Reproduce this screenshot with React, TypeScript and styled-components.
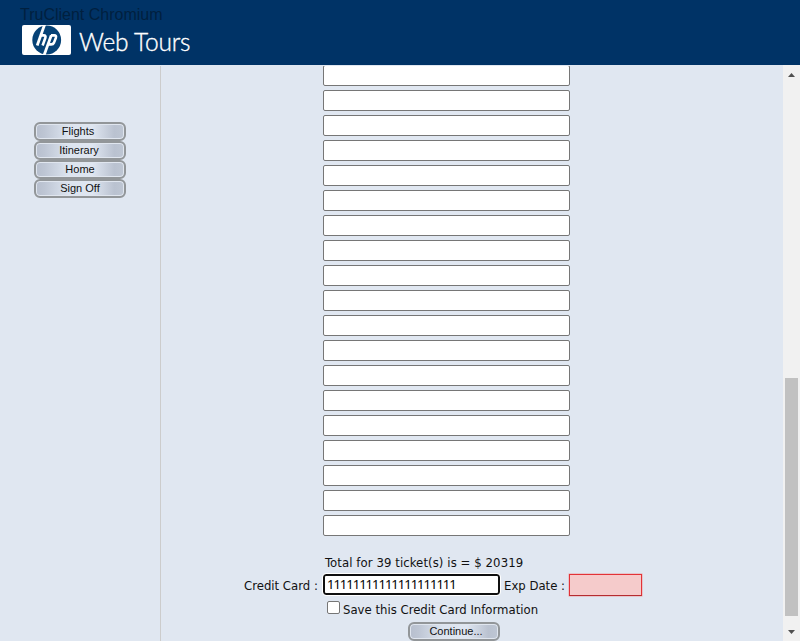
import React from 'react';
import styled, { createGlobalStyle } from 'styled-components';

const GlobalStyle = createGlobalStyle`
  * { box-sizing: border-box; }
  html, body, #root { margin: 0; height: 100%; overflow: hidden; }
  body { background: #e0e7f1; color: #111; font-family: "DejaVu Sans Condensed", "DejaVu Sans", sans-serif; }
`;

const Page = styled.div`
  height: 641px;
  width: 800px;
  display: flex;
  flex-direction: column;
  overflow: hidden;
`;

const Header = styled.header`
  position: relative;
  flex: 0 0 65px;
  background: #003366;
  display: flex;
  align-items: flex-start;
  padding: 25px 0 0 22px;
`;

const Overlay = styled.div`
  position: absolute;
  left: 20px;
  top: 6px;
  color: #00203f;
  font: 16px/18px "Liberation Sans", Arial, sans-serif;
  white-space: nowrap;
`;

const Title = styled.div`
  margin: 2px 0 0 8px;
  color: #fff;
  font: 300 24.5px/30px Lato, sans-serif;
  letter-spacing: -0.2px;
  -webkit-text-stroke: 0.35px #fff;
  white-space: nowrap;
`;

const Body = styled.div`
  flex: 1;
  min-height: 0;
  display: flex;
`;

const Nav = styled.nav`
  flex: 0 0 161px;
  margin-top: 1px;
  padding: 56px 0 0 34px;
  border-right: 1px solid #ccc;
  display: flex;
  flex-direction: column;
`;

const PillButton = styled.button<{ $shift?: number }>`
  display: block;
  width: 92px;
  height: 19px;
  flex: none;
  margin: 0;
  padding: 0 ${p => Math.max(0, -(p.$shift ?? 0))}px 0 ${p => Math.max(0, p.$shift ?? 0)}px;
  border: 2px solid #929699;
  border-radius: 6px;
  background: linear-gradient(90deg, #b7bfce 0, #bdc5d3 9%, #dce4ef 37%, #dfe6f1 64%, #bac2d0 89%, #bec6d3 100%);
  box-shadow: inset 0 0 0 1px #e0e6ef;
  color: #111;
  font: 11px/15px "Liberation Sans", Arial, sans-serif;
  text-align: center;
`;

const Main = styled.main`
  flex: 1;
  min-width: 0;
  overflow: hidden;
  display: flex;
  flex-direction: column;
`;

const Passengers = styled.div`
  height: 485px;
  flex: none;
  margin-top: 1px;
  padding-left: 162px;
  display: flex;
  flex-direction: column;
  justify-content: flex-end;
  gap: 4px;
  overflow: hidden;
  padding-bottom: 15px;
`;

const PassengerInput = styled.input`
  flex: none;
  width: 247px;
  height: 21px;
  border: 1px solid #767676;
  border-radius: 2px;
  background: #fff;
  outline: none;
`;

const Label = styled.span<{ $spacing?: number }>`
  font: 13px/20px "DejaVu Sans Condensed", "DejaVu Sans", sans-serif;
  font-stretch: condensed;
  letter-spacing: ${p => p.$spacing ?? 0}px;
  white-space: pre;
`;

const Total = styled.div`
  height: 21px;
  padding: 2px 0 0 164px;
  display: flex;
`;

const CardRow = styled.div`
  height: 26px;
  display: flex;
  align-items: center;
`;

const CardLabel = styled.div`
  width: 162px;
  padding: 3px 0 0 83px;
  display: flex;
`;

const CardInput = styled.input`
  width: 177px;
  height: 21px;
  margin: 0;
  padding: 0 2px;
  border: 2px solid #101010;
  border-radius: 3px;
  outline: 1px solid #fff;
  background: #fff;
  color: #000;
  font: 13px/17px "Noto Sans", sans-serif;
  letter-spacing: -1px;
`;

const ExpLabel = styled.div`
  width: 69px;
  padding: 3px 0 0 4px;
  display: flex;
`;

const ExpInput = styled.input`
  width: 73px;
  height: 22px;
  margin: 1px 0 0;
  border: 1px solid #e33237;
  border-bottom-color: #b52c30;
  outline: none;
  background: #f5cbcb;
  box-shadow: 0 0 0 0.5px #e9a3a6;
`;

const SaveRow = styled.label`
  height: 24px;
  padding-left: 166px;
  display: flex;
  align-items: flex-start;
`;

const Check = styled.input`
  appearance: none;
  width: 13px;
  height: 13px;
  margin: 5px 3px 0 0;
  border: 1px solid #767676;
  border-radius: 2px;
  background: #fff;
`;

const SaveText = styled.span`
  padding-top: 4px;
  display: flex;
`;

const ContinueRow = styled.div`
  padding: 2px 0 0 247px;
`;

const Scrollbar = styled.div`
  flex: 0 0 17px;
  background: #f1f1f1;
  display: flex;
  flex-direction: column;
  align-items: center;
`;

const Arrow = styled.svg`
  display: block;
  flex: none;
  width: 17px;
  height: 17px;
`;

const Track = styled.div`
  flex: 1;
  padding-top: 296px;
`;

const Thumb = styled.div`
  width: 13px;
  height: 238px;
  background: #c1c1c1;
`;

const Logo = () => (
  <svg width="49" height="30" viewBox="0 0 49 30" aria-label="hp">
    <rect width="49" height="30" rx="2" fill="#fff" />
    <circle cx="24.7" cy="15" r="14.4" fill="#064276" />
    <g fill="none" stroke="#fff" strokeWidth="2.6" strokeLinejoin="round">
      <path d="M22.8 -1 L15.2 20.5" strokeWidth="2.8" />
      <path d="M18.5 10.4 H21.8 Q24.2 10.4 23.3 13 L20.6 20.5" />
      <path d="M29.3 10.3 L21.8 31" strokeWidth="2.8" />
      <path d="M29 10.4 H32.2 Q34.7 10.4 33.8 13 L32 17.6 Q31.2 19.4 29.2 19.4 H26" />
    </g>
  </svg>
);

const navItems = [
  { name: 'Flights', shift: -4 },
  { name: 'Itinerary', shift: -2 },
  { name: 'Home', shift: 0 },
  { name: 'Sign Off', shift: 0 },
];

export default function App() {
  return (
    <>
      <GlobalStyle />
      <Page>
        <Header>
          <Overlay>TruClient Chromium</Overlay>
          <Logo />
          <Title>Web Tours</Title>
        </Header>
        <Body>
          <Nav>
            {navItems.map(item => (
              <PillButton key={item.name} $shift={item.shift}>{item.name}</PillButton>
            ))}
          </Nav>
          <Main>
            <Passengers>
              {Array.from({ length: 19 }, (_, i) => <PassengerInput key={i} />)}
            </Passengers>
            <Total><Label $spacing={0.08}>Total for 39 ticket(s) is = $ 20319</Label></Total>
            <CardRow>
              <CardLabel><Label>Credit Card :</Label></CardLabel>
              <CardInput defaultValue="11111111111111111111" />
              <ExpLabel><Label>Exp Date :</Label></ExpLabel>
              <ExpInput />
            </CardRow>
            <SaveRow>
              <Check type="checkbox" />
              <SaveText><Label>Save this Credit Card Information</Label></SaveText>
            </SaveRow>
            <ContinueRow><PillButton $shift={4}>Continue...</PillButton></ContinueRow>
          </Main>
          <Scrollbar>
            <Arrow viewBox="0 0 17 17"><path d="M5 12 L8.5 8 L12 12 Z" fill="#505050" /></Arrow>
            <Track><Thumb /></Track>
            <Arrow viewBox="0 0 17 17"><path d="M5 6 L8.5 10 L12 6 Z" fill="#505050" /></Arrow>
          </Scrollbar>
        </Body>
      </Page>
    </>
  );
}
